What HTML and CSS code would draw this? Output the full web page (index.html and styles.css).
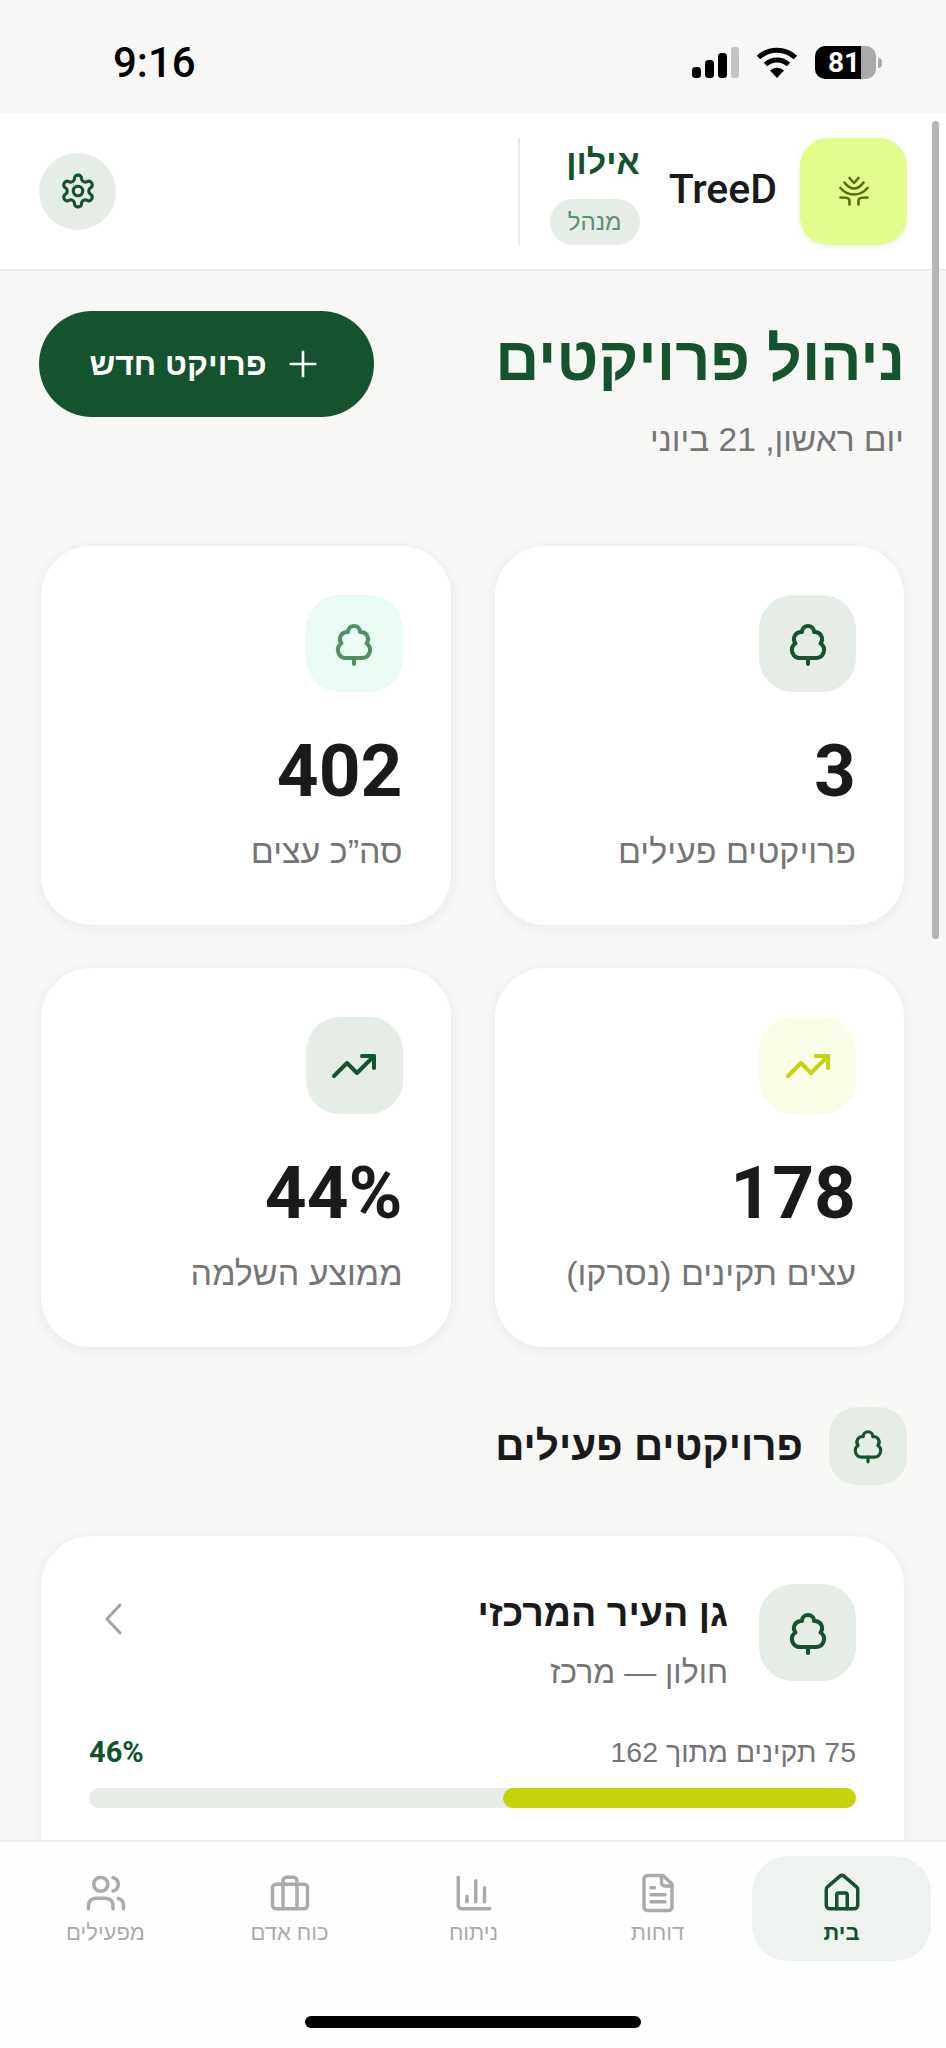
FILE: index.html
```html
<!DOCTYPE html>
<html lang="he" dir="rtl">
<head>
    <meta charset="UTF-8">
    <meta name="viewport" content="width=device-width, initial-scale=1.0">
    <title>TreeD</title>
    <link rel="stylesheet" href="styles.css">
</head>
<body>
<div class="screen">
    <div class="status-bar" dir="ltr">
        <span class="time">9:16</span>
        <div class="status-icons">
            <svg class="signal" width="47" height="31" viewBox="0 0 47 31">
                <rect x="0" y="20" width="9" height="11" rx="3.5" fill="#000"/>
                <rect x="13" y="13" width="9" height="18" rx="3.5" fill="#000"/>
                <rect x="26" y="6" width="9" height="25" rx="3.5" fill="#000"/>
                <rect x="39" y="0" width="8" height="31" rx="3" fill="#c4c4c4"/>
            </svg>
            <svg class="wifi" width="40" height="31" viewBox="0 0 40 31">
                <path d="M1.5 10.5a27 27 0 0 1 37 0" fill="none" stroke="#000" stroke-width="5"/>
                <path d="M8.5 17.5a17 17 0 0 1 23 0" fill="none" stroke="#000" stroke-width="5"/>
                <path d="M13 23.5a10 10 0 0 1 14 0L20 31z" fill="#000"/>
            </svg>
            <div class="battery">
                <div class="battery-body"><span class="battery-num">81</span></div>
                <div class="battery-tip"></div>
            </div>
        </div>
    </div>

    <header class="top-bar">
        <div class="logo">
            <svg width="30" height="30" viewBox="0 0 30 30" fill="none" stroke="#5c6b10" stroke-width="2.6" stroke-linecap="round" stroke-linejoin="round">
                <path d="M10.5 2l4.5 5 4.5-5"/>
                <path d="M5.5 6.5c2.5 3.5 6 6 9.5 6s7-2.500 9.500-6"/>
                <path d="M1.500 12c3 3.500 8 6.500 13.500 6.500s10.500-3 13.500-6.500"/>
                <path d="M1.500 21.500c4 0 9-.5 9 3.500v3.500"/>
                <path d="M28.500 21.500c-4 0-9-.5-9 3.500v3.500"/>
            </svg>
        </div>
        <div class="brand">TreeD</div>
        <div class="user">
            <div class="user-name">אילון</div>
            <div class="user-role">מנהל</div>
        </div>
        <button class="settings">
            <svg width="38" height="38" viewBox="0 0 24 24" fill="none" stroke="#14532d" stroke-width="2" stroke-linecap="round" stroke-linejoin="round">
                <path d="M12.220 2h-.44a2 2 0 0 0-2 2v.18a2 2 0 0 1-1 1.730l-.43.25a2 2 0 0 1-2 0l-.15-.08a2 2 0 0 0-2.730.73l-.22.38a2 2 0 0 0 .73 2.730l.15.1a2 2 0 0 1 1 1.720v.51a2 2 0 0 1-1 1.740l-.15.09a2 2 0 0 0-.73 2.730l.22.38a2 2 0 0 0 2.730.73l.15-.08a2 2 0 0 1 2 0l.43.25a2 2 0 0 1 1 1.730V20a2 2 0 0 0 2 2h.44a2 2 0 0 0 2-2v-.18a2 2 0 0 1 1-1.730l.43-.25a2 2 0 0 1 2 0l.15.08a2 2 0 0 0 2.730-.73l.22-.39a2 2 0 0 0-.73-2.730l-.15-.08a2 2 0 0 1-1-1.740v-.5a2 2 0 0 1 1-1.740l.15-.09a2 2 0 0 0 .73-2.730l-.22-.38a2 2 0 0 0-2.730-.73l-.15.08a2 2 0 0 1-2 0l-.43-.25a2 2 0 0 1-1-1.730V4a2 2 0 0 0-2-2z"/>
                <circle cx="12" cy="12" r="3"/>
            </svg>
        </button>
    </header>

    <main class="content">
        <div class="page-head">
            <h1 class="page-title">ניהול פרויקטים</h1>
            <button class="new-project">
                <svg width="42" height="42" viewBox="0 0 24 24" fill="none" stroke="#fff" stroke-width="1.500" stroke-linecap="round"><path d="M5 12h14"/><path d="M12 5v14"/></svg>
                <span>פרויקט חדש</span>
            </button>
        </div>
        <div class="page-date">יום ראשון, 21 ביוני</div>

        <div class="stats">
            <div class="stat-card">
                <div class="icon-box icon-box-green">
                    <svg class="tree" width="48" height="48" viewBox="0 0 24 24"><path d="M8 19a4 4 0 0 1-2.240-7.320A3.500 3.500 0 0 1 9 6.030V6a3 3 0 1 1 6 0v.04a3.500 3.500 0 0 1 3.240 5.650A4 4 0 0 1 16 19Z"/><path d="M12 19v3"/></svg>
                </div>
                <div class="stat-value">3</div>
                <div class="stat-label">פרויקטים פעילים</div>
            </div>
            <div class="stat-card">
                <div class="icon-box icon-box-mint">
                    <svg class="tree tree-soft" width="48" height="48" viewBox="0 0 24 24"><path d="M8 19a4 4 0 0 1-2.240-7.320A3.500 3.500 0 0 1 9 6.030V6a3 3 0 1 1 6 0v.04a3.500 3.500 0 0 1 3.240 5.650A4 4 0 0 1 16 19Z"/><path d="M12 19v3"/></svg>
                </div>
                <div class="stat-value">402</div>
                <div class="stat-label">סה”כ עצים</div>
            </div>
            <div class="stat-card">
                <div class="icon-box icon-box-lime">
                    <svg class="trend trend-lime" width="48" height="48" viewBox="0 0 24 24"><path d="M22 7l-8.500 8.500-5-5L2 17"/><path d="M16 7h6v6"/></svg>
                </div>
                <div class="stat-value">178</div>
                <div class="stat-label">עצים תקינים (נסרקו)</div>
            </div>
            <div class="stat-card">
                <div class="icon-box icon-box-green">
                    <svg class="trend" width="48" height="48" viewBox="0 0 24 24"><path d="M22 7l-8.500 8.500-5-5L2 17"/><path d="M16 7h6v6"/></svg>
                </div>
                <div class="stat-value">44%</div>
                <div class="stat-label">ממוצע השלמה</div>
            </div>
        </div>

        <div class="section-head">
            <div class="section-icon">
                <svg class="tree" width="38" height="38" viewBox="0 0 24 24"><path d="M8 19a4 4 0 0 1-2.240-7.320A3.500 3.500 0 0 1 9 6.030V6a3 3 0 1 1 6 0v.04a3.500 3.500 0 0 1 3.240 5.650A4 4 0 0 1 16 19Z"/><path d="M12 19v3"/></svg>
            </div>
            <h2 class="section-title">פרויקטים פעילים</h2>
        </div>

        <div class="project-card">
            <div class="project-top">
                <div class="icon-box icon-box-green">
                    <svg class="tree" width="48" height="48" viewBox="0 0 24 24"><path d="M8 19a4 4 0 0 1-2.240-7.320A3.500 3.500 0 0 1 9 6.030V6a3 3 0 1 1 6 0v.04a3.500 3.500 0 0 1 3.240 5.650A4 4 0 0 1 16 19Z"/><path d="M12 19v3"/></svg>
                </div>
                <div class="project-info">
                    <div class="project-name">גן העיר המרכזי</div>
                    <div class="project-place">חולון — מרכז</div>
                </div>
                <svg class="chevron" width="18" height="32" viewBox="0 0 18 32" fill="none" stroke="#a3a3a3" stroke-width="3" stroke-linecap="round" stroke-linejoin="round"><path d="M16 2L3 16l13 14"/></svg>
            </div>
            <div class="progress-row">
                <span class="progress-text">75 תקינים מתוך 162</span>
                <span class="progress-pct">46%</span>
            </div>
            <div class="progress-track"><div class="progress-fill" style="width: 46%"></div></div>
        </div>
    </main>

    <div class="scroll-thumb"></div>

    <nav class="bottom-nav">
        <div class="tabs">
            <div class="tab tab-active">
                <svg width="42" height="42" viewBox="0 0 24 24"><path d="M15 21v-8a1 1 0 0 0-1-1h-4a1 1 0 0 0-1 1v8"/><path d="M3 10a2 2 0 0 1 .709-1.528l7-5.999a2 2 0 0 1 2.582 0l7 5.999A2 2 0 0 1 21 10v9a2 2 0 0 1-2 2H5a2 2 0 0 1-2-2z"/></svg>
                <span>בית</span>
            </div>
            <div class="tab">
                <svg width="42" height="42" viewBox="0 0 24 24"><path d="M15 2H6a2 2 0 0 0-2 2v16a2 2 0 0 0 2 2h12a2 2 0 0 0 2-2V7Z"/><path d="M14 2v4a2 2 0 0 0 2 2h4"/><path d="M10 9H8"/><path d="M16 13H8"/><path d="M16 17H8"/></svg>
                <span>דוחות</span>
            </div>
            <div class="tab">
                <svg width="42" height="42" viewBox="0 0 24 24"><path d="M3 3v16a2 2 0 0 0 2 2h16"/><path d="M18 17V9"/><path d="M13 17V5"/><path d="M8 17v-3"/></svg>
                <span>ניתוח</span>
            </div>
            <div class="tab">
                <svg width="42" height="42" viewBox="0 0 24 24"><rect x="2" y="7" width="20" height="14" rx="2"/><path d="M16 21V5a2 2 0 0 0-2-2h-4a2 2 0 0 0-2 2v16"/></svg>
                <span>כוח אדם</span>
            </div>
            <div class="tab">
                <svg width="42" height="42" viewBox="0 0 24 24"><path d="M16 21v-2a4 4 0 0 0-4-4H6a4 4 0 0 0-4 4v2"/><circle cx="9" cy="7" r="4"/><path d="M22 21v-2a4 4 0 0 0-3-3.870"/><path d="M16 3.130a4 4 0 0 1 0 7.750"/></svg>
                <span>מפעילים</span>
            </div>
        </div>
        <div class="home-bar"></div>
    </nav>
</div>
</body>
</html>
```

FILE: styles.css
```css
*{
    box-sizing: border-box;
    margin: 0;
    padding: 0;
}
body{
    font-family: "Liberation Sans", Roboto, sans-serif;
    background-color: #f7f7f5;
    color: #1a1a1a;
}
button{
    border: none;
    font-family: inherit;
}
.screen{
    position: relative;
    width: 946px;
    height: 2048px;
    display: flex;
    flex-direction: column;
    overflow: hidden;
    background-color: #f7f7f5;
}

/* status bar */
.status-bar{
    height: 113px;
    flex: none;
    display: flex;
    align-items: center;
    justify-content: space-between;
    padding: 0 64px 0 113px;
}
.time{
    font-family: Roboto, sans-serif;
    font-size: 42px;
    font-weight: 500;
    color: #000;
    padding-top: 12px;
}
.status-icons{
    display: flex;
    align-items: center;
    gap: 18px;
    padding-top: 12px;
}
.battery{
    display: flex;
    align-items: center;
    gap: 2px;
}
.battery-body{
    width: 61px;
    height: 33px;
    border-radius: 10px;
    background: linear-gradient(to right, #000 46px, #a9a9a9 46px);
    padding-left: 13px;
}
.battery-num{
    font-family: Roboto, sans-serif;
    color: #fff;
    font-size: 28px;
    font-weight: 700;
    line-height: 33px;
    display: block;
}
.battery-tip{
    width: 4px;
    height: 10px;
    background-color: #aaa;
    border-radius: 0 4px 4px 0;
}

/* top bar */
.top-bar{
    height: 158px;
    flex: none;
    display: flex;
    align-items: center;
    padding: 0 39px;
    background-color: #fff;
    border-bottom: 2px solid #ececea;
}
.logo{
    width: 107px;
    height: 107px;
    border-radius: 28px;
    background-color: #e3fd8c;
    box-shadow: 0 2px 6px rgba(20, 83, 45, 0.08);
    display: flex;
    align-items: center;
    justify-content: center;
}
.brand{
    margin-right: 23px;
    padding-bottom: 4px;
    font-family: Roboto, sans-serif;
    font-size: 41px;
    font-weight: 500;
}
.user{
    margin-right: 29px;
    height: 107px;
    padding-left: 30px;
    border-left: 2px solid #e9e9e6;
    display: flex;
    flex-direction: column;
    align-items: flex-start;
    justify-content: space-between;
}
.user-name{
    font-size: 34px;
    font-weight: 700;
    line-height: 48px;
    color: #14532d;
}
.user-role{
    width: 90px;
    height: 46px;
    border-radius: 23px;
    background-color: #e6ede7;
    color: #5c8f6e;
    font-size: 24px;
    line-height: 46px;
    text-align: center;
}
.settings{
    margin-right: auto;
    width: 77px;
    height: 77px;
    border-radius: 50%;
    background-color: #e6ede7;
    display: flex;
    align-items: center;
    justify-content: center;
}

/* main */
.content{
    flex: 1;
    min-height: 0;
    overflow: hidden;
    padding: 40px 42px 0 41px;
}
.page-head{
    height: 106px;
    display: flex;
    align-items: center;
    justify-content: space-between;
}
.page-title{
    font-size: 61px;
    font-weight: 700;
    color: #14532d;
    margin-right: -1px;
    padding-bottom: 10px;
}
.new-project{
    width: 335px;
    height: 106px;
    margin-left: -2px;
    border-radius: 53px;
    background-color: #14532d;
    color: #fff;
    font-size: 32px;
    font-weight: 700;
    display: flex;
    align-items: center;
    justify-content: center;
    gap: 15px;
}
.page-date{
    margin-top: 3px;
    font-size: 33.5px;
    line-height: 40px;
    color: #757575;
}

/* stat cards */
.stats{
    margin-top: 86px;
    display: grid;
    grid-template-columns: 1fr 1fr;
    gap: 43px 44px;
}
.stat-card{
    height: 379px;
    padding: 49px 48px 0;
    border-radius: 50px;
    background-color: #fff;
    box-shadow: 0 3px 14px rgba(20, 83, 45, 0.07);
}
.icon-box{
    width: 97px;
    height: 97px;
    flex: none;
    border-radius: 34px;
    display: flex;
    align-items: center;
    justify-content: center;
}
.icon-box-green{
    background-color: #e6ede7;
}
.icon-box-mint{
    background-color: #eafbf3;
}
.icon-box-lime{
    background-color: #fafee8;
}
.tree, .trend{
    fill: none;
    stroke: #14532d;
    stroke-width: 2;
    stroke-linecap: round;
    stroke-linejoin: round;
}
.tree-soft{
    stroke: #4c9262;
}
.trend-lime{
    stroke: #c5d30a;
}
.stat-value{
    margin-top: 39px;
    font-family: Roboto, sans-serif;
    font-size: 73px;
    font-weight: 700;
    line-height: 80px;
}
.stat-label{
    margin-top: 20px;
    font-size: 34px;
    line-height: 40px;
    color: #757575;
}

/* active projects */
.section-head{
    margin-top: 60px;
    margin-right: -3px;
    display: flex;
    align-items: center;
    gap: 26px;
}
.section-icon{
    width: 78px;
    height: 78px;
    border-radius: 28px;
    background-color: #e6ede7;
    display: flex;
    align-items: center;
    justify-content: center;
}
.section-title{
    font-size: 40.5px;
    font-weight: 700;
}
.project-card{
    margin-top: 51px;
    height: 400px;
    padding: 48px 48px 0;
    border-radius: 50px;
    background-color: #fff;
    box-shadow: 0 3px 14px rgba(20, 83, 45, 0.07);
}
.project-top{
    display: flex;
    align-items: flex-start;
    gap: 31px;
}
.project-info{
    flex: 1;
    padding-top: 7px;
}
.project-name{
    font-size: 37.5px;
    font-weight: 700;
    line-height: 44px;
}
.project-place{
    margin-top: 17px;
    font-size: 32px;
    line-height: 40px;
    color: #757575;
}
.chevron{
    margin: 19px 0 0 15px;
}
.progress-row{
    margin-top: 42px;
    height: 36px;
    display: flex;
    align-items: center;
    justify-content: space-between;
}
.progress-text{
    font-size: 28.5px;
    color: #757575;
}
.progress-pct{
    font-family: Roboto, sans-serif;
    font-size: 29px;
    font-weight: 700;
    color: #14532d;
}
.progress-track{
    margin-top: 18px;
    height: 20px;
    border-radius: 10px;
    background-color: #e6ede7;
}
.progress-fill{
    height: 100%;
    border-radius: 10px;
    background-color: #c5d30a;
}

/* overlay scrollbar */
.scroll-thumb{
    position: absolute;
    top: 121px;
    left: 932px;
    width: 7px;
    height: 818px;
    border-radius: 4px;
    background-color: #b5b5b5;
}

/* bottom nav */
.bottom-nav{
    height: 208px;
    flex: none;
    background-color: #fefefe;
    border-top: 2px solid #eef1ee;
    padding-top: 14px;
}
.tabs{
    display: flex;
    gap: 5px;
    padding: 0 15px 0 16px;
}
.tab{
    width: 179px;
    height: 105px;
    padding-top: 16px;
    border-radius: 36px;
    display: flex;
    flex-direction: column;
    align-items: center;
    color: #aaaaaa;
    font-size: 22px;
    line-height: 28px;
}
.tab svg{
    fill: none;
    stroke: #aaaaaa;
    stroke-width: 2;
    stroke-linecap: round;
    stroke-linejoin: round;
    margin-bottom: 5px;
}
.tab-active{
    background-color: #eff3f0;
    color: #14532d;
    font-weight: 700;
}
.tab-active svg{
    stroke: #14532d;
}
.home-bar{
    width: 336px;
    height: 12px;
    margin: 55px auto 0;
    border-radius: 6px;
    background-color: #000;
}
```
